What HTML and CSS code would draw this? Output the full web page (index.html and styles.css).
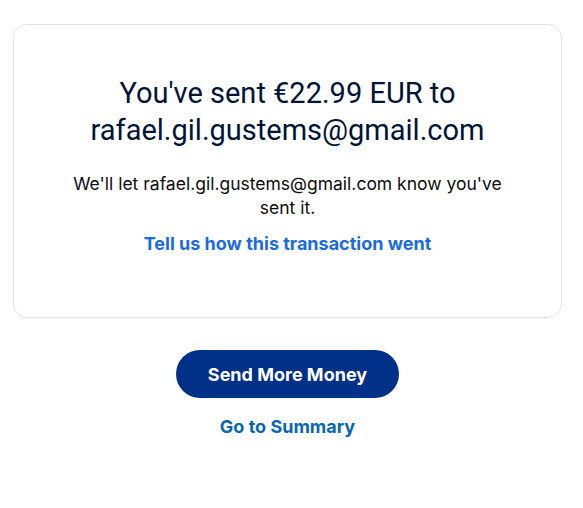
FILE: index.html
```html
<!DOCTYPE html>
<html>
<head>
<meta charset="utf-8">
<link rel="stylesheet" href="styles.css">
</head>
<body>
<div class="page">
  <section class="card">
    <h1 class="title">You've sent €22.99 EUR to rafael.gil.gustems@gmail.com</h1>
    <p class="note">We'll let rafael.gil.gustems@gmail.com know you've sent it.</p>
    <a class="feedback" href="#">Tell us how this transaction went</a>
  </section>
  <div class="actions">
    <button class="primary">Send More Money</button>
    <a class="summary" href="#">Go to Summary</a>
  </div>
</div>
</body>
</html>
```
FILE: styles.css
```css
* { box-sizing: border-box; }
body {
  margin: 0;
  background: #fff;
  font-family: Inter, "Liberation Sans", Arial, sans-serif;
  color: #001435;
}
.page {
  padding: 24px 21px 0 13px;
}
.card {
  border: 1px solid #e3e3e3;
  border-radius: 14px;
  height: 294px;
  padding: 50px 30px 0;
  display: flex;
  flex-direction: column;
  align-items: center;
  text-align: center;
}
.title {
  margin: 0;
  font-family: Roboto, "Liberation Sans", Arial, sans-serif;
  font-size: 29px;
  font-weight: 400;
  line-height: 37px;
  max-width: 460px;
}
.note {
  margin: 23px 0 0;
  font-size: 17.5px;
  line-height: 24px;
  max-width: 450px;
  color: #0c0c0d;
}
.feedback {
  margin-top: 12px;
  font-size: 18px;
  font-weight: 700;
  line-height: 24px;
  color: #1a6be0;
  text-decoration: none;
}
.actions {
  display: flex;
  flex-direction: column;
  align-items: center;
  padding-top: 32px;
}
.primary {
  width: 223px;
  height: 48px;
  border: none;
  border-radius: 24px;
  background: #003087;
  color: #fff;
  font-family: Inter, "Liberation Sans", Arial, sans-serif;
  font-size: 18px;
  font-weight: 700;
}
.summary {
  margin-top: 17px;
  font-size: 18px;
  font-weight: 700;
  line-height: 24px;
  color: #0a66b0;
  text-decoration: none;
}
```
